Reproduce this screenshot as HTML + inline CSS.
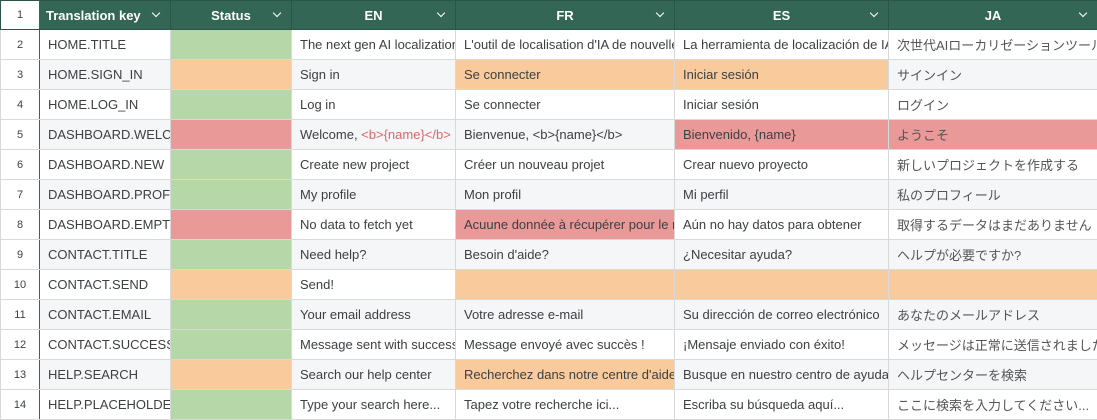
<!DOCTYPE html>
<html><head><meta charset="utf-8"><style>
body{margin:0;width:1097px;height:417px;overflow:hidden;background:#fff;font-family:"Liberation Sans","Noto Sans CJK JP",sans-serif;}
table{border-collapse:collapse;table-layout:fixed;width:1097px;}
td,th{border:1px solid #d9d9d9;height:30px;padding:0 0 0 8px;white-space:nowrap;overflow:hidden;font-size:13px;color:#3c4043;text-align:left;box-sizing:border-box;}
th{background:#336655;color:#fff;font-weight:bold;text-align:center;position:relative;border-color:#2b5547;padding:0;height:29px;}
th .ch{position:absolute;right:11px;top:9px;width:5px;height:5px;border-right:1.6px solid #fff;border-bottom:1.6px solid #fff;transform:rotate(45deg);}
th.n,td.n{background:#fff;color:#3c4043;font-weight:normal;font-size:11px;text-align:center;padding:0;border-right:1px solid #555;}
tr:nth-child(odd) td{background:#f5f6f8;}
td.n{background:#fff!important;}
td.g{background:#b6d7a8!important}td.o{background:#f9cb9c!important}td.r{background:#ea9999!important}
.red{color:#e06666}
td.j{color:#555;}
</style></head><body>
<table>
<colgroup><col style="width:39px"><col style="width:131px"><col style="width:121px"><col style="width:164px"><col style="width:219px"><col style="width:214px"><col style="width:209px"></colgroup>
<tr><th class="n">1</th><th style="text-align:left;padding-left:6px">Translation key<span class="ch"></span></th><th>Status<span class="ch"></span></th><th>EN<span class="ch"></span></th><th>FR<span class="ch"></span></th><th>ES<span class="ch"></span></th><th>JA<span class="ch"></span></th></tr>
<tr><td class="n">2</td><td>HOME.TITLE</td><td class="g"></td><td>The next gen AI localization tool</td><td>L'outil de localisation d'IA de nouvelle</td><td>La herramienta de localización de IA</td><td class="j">次世代AIローカリゼーションツール</td></tr>
<tr><td class="n">3</td><td>HOME.SIGN_IN</td><td class="o"></td><td>Sign in</td><td class="o">Se connecter</td><td class="o">Iniciar sesión</td><td class="j">サインイン</td></tr>
<tr><td class="n">4</td><td>HOME.LOG_IN</td><td class="g"></td><td>Log in</td><td>Se connecter</td><td>Iniciar sesión</td><td class="j">ログイン</td></tr>
<tr><td class="n">5</td><td>DASHBOARD.WELCOME</td><td class="r"></td><td>Welcome, <span class="red">&lt;b&gt;{name}&lt;/b&gt;</span></td><td>Bienvenue, &lt;b&gt;{name}&lt;/b&gt;</td><td class="r">Bienvenido, {name}</td><td class="r j">ようこそ</td></tr>
<tr><td class="n">6</td><td>DASHBOARD.NEW</td><td class="g"></td><td>Create new project</td><td>Créer un nouveau projet</td><td>Crear nuevo proyecto</td><td class="j">新しいプロジェクトを作成する</td></tr>
<tr><td class="n">7</td><td>DASHBOARD.PROFILE</td><td class="g"></td><td>My profile</td><td>Mon profil</td><td>Mi perfil</td><td class="j">私のプロフィール</td></tr>
<tr><td class="n">8</td><td>DASHBOARD.EMPTY</td><td class="r"></td><td>No data to fetch yet</td><td class="r">Acuune donnée à récupérer pour le moment</td><td>Aún no hay datos para obtener</td><td class="j">取得するデータはまだありません</td></tr>
<tr><td class="n">9</td><td>CONTACT.TITLE</td><td class="g"></td><td>Need help?</td><td>Besoin d'aide?</td><td>¿Necesitar ayuda?</td><td class="j">ヘルプが必要ですか?</td></tr>
<tr><td class="n">10</td><td>CONTACT.SEND</td><td class="o"></td><td>Send!</td><td class="o"></td><td class="o"></td><td class="o"></td></tr>
<tr><td class="n">11</td><td>CONTACT.EMAIL</td><td class="g"></td><td>Your email address</td><td>Votre adresse e-mail</td><td>Su dirección de correo electrónico</td><td class="j">あなたのメールアドレス</td></tr>
<tr><td class="n">12</td><td>CONTACT.SUCCESS</td><td class="g"></td><td>Message sent with success!</td><td>Message envoyé avec succès !</td><td>¡Mensaje enviado con éxito!</td><td class="j">メッセージは正常に送信されました</td></tr>
<tr><td class="n">13</td><td>HELP.SEARCH</td><td class="o"></td><td>Search our help center</td><td class="o">Recherchez dans notre centre d'aide</td><td>Busque en nuestro centro de ayuda</td><td class="j">ヘルプセンターを検索</td></tr>
<tr><td class="n">14</td><td>HELP.PLACEHOLDER</td><td class="g"></td><td>Type your search here...</td><td>Tapez votre recherche ici...</td><td>Escriba su búsqueda aquí...</td><td class="j">ここに検索を入力してください...</td></tr>
</table>
</body></html>
